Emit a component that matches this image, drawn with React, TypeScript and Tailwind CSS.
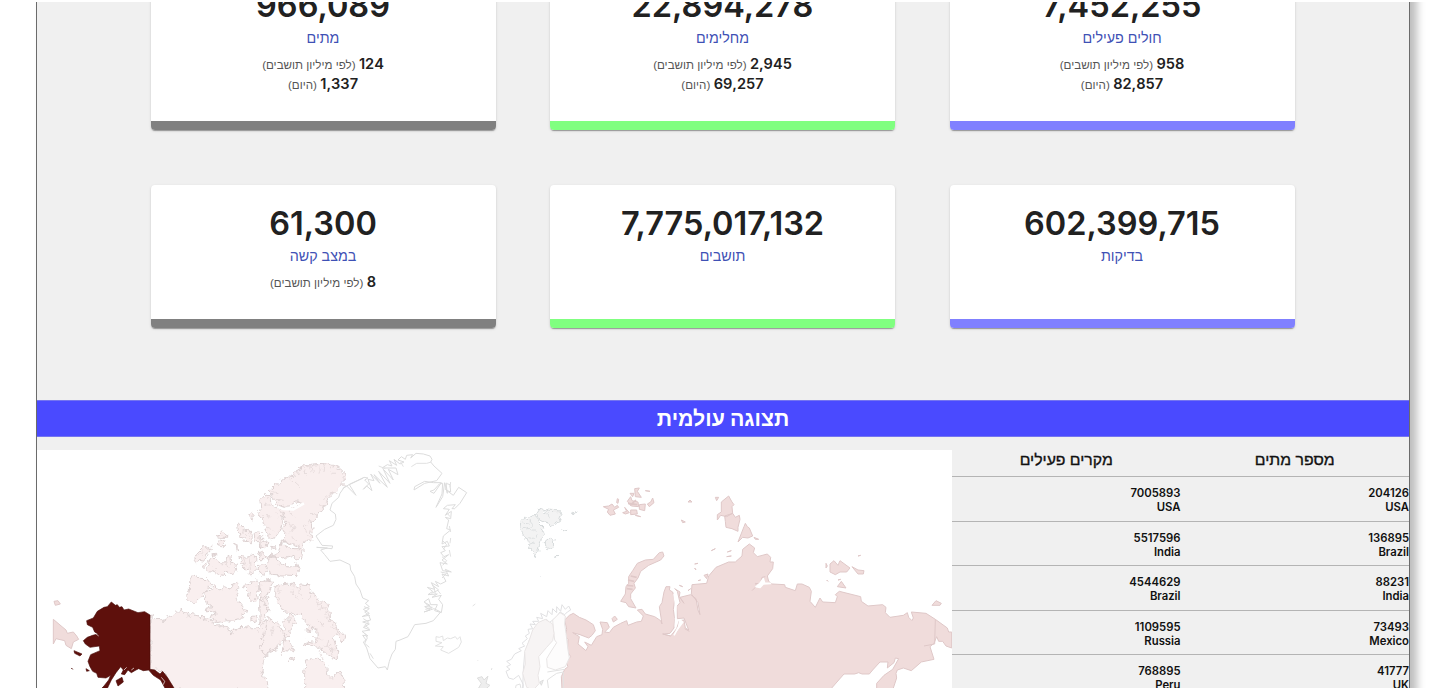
type Card = { value: string; label: string; bar: string; tall?: boolean; lines: [string, string][] };

const PER_MILLION = "(לפי מיליון תושבים)";
const TODAY = "(היום)";

const totals: Card[] = [
  { value: "966,089", label: "מתים", bar: "bg-[#808080]", tall: true, lines: [["124", PER_MILLION], ["1,337", TODAY]] },
  { value: "22,894,278", label: "מחלימים", bar: "bg-[#80ff80]", tall: true, lines: [["2,945", PER_MILLION], ["69,257", TODAY]] },
  { value: "7,452,255", label: "חולים פעילים", bar: "bg-[#8080ff]", tall: true, lines: [["958", PER_MILLION], ["82,857", TODAY]] },
  { value: "61,300", label: "במצב קשה", bar: "bg-[#808080]", lines: [["8", PER_MILLION]] },
  { value: "7,775,017,132", label: "תושבים", bar: "bg-[#80ff80]", lines: [] },
  { value: "602,399,715", label: "בדיקות", bar: "bg-[#8080ff]", lines: [] },
];

const columns: { title: string; rows: [string, string][] }[] = [
  {
    title: "מקרים פעילים",
    rows: [["7005893", "USA"], ["5517596", "India"], ["4544629", "Brazil"], ["1109595", "Russia"], ["768895", "Peru"]],
  },
  {
    title: "מספר מתים",
    rows: [["204126", "USA"], ["136895", "Brazil"], ["88231", "India"], ["73493", "Mexico"], ["41777", "UK"]],
  },
];

function StatCard({ card }: { card: Card }) {
  return (
    <div
      className={`flex flex-col overflow-hidden rounded-[4px] bg-white text-center shadow-[0_2px_1px_-1px_rgba(0,0,0,.2),0_1px_1px_rgba(0,0,0,.14),0_1px_3px_rgba(0,0,0,.12)] ${card.tall ? "h-[163px]" : "h-[143px]"}`}
    >
      <div className="mt-4 h-[46px] text-[32.5px] font-semibold leading-[46px] text-[#212121]">{card.value}</div>
      <div dir="rtl" className="h-5 font-['Liberation_Sans',sans-serif] text-[14.3px] leading-[19px] text-[#3f51b5]">{card.label}</div>
      <div className="mt-[5px] flex-1">
        {card.lines.map(([n, note]) => (
          <div key={note} dir="rtl" className="h-5 text-[12px] leading-5 text-[#555]">
            <span className="text-[14.6px] font-semibold text-[#212121]">{n}</span>{" "}
            <span className="font-['Liberation_Sans',sans-serif] text-[11.6px]">{note}</span>
          </div>
        ))}
      </div>
      <div className={`h-[9px] shrink-0 ${card.bar}`} />
    </div>
  );
}

const canada = [
  // mainland and arctic coast
  "M360 525L398 545L402 538L415 530L428 526L440 516L448 520L454 507L462 522L472 516L475 532L482 524L488 524L520 531L526 540L545 541L550 551L558 558L575 557L590 560L600 572L598 578L604 586L608 570L622 562L640 563L655 557L664 562L676 566L690 570L694 558L688 548L694 538L704 548L712 540L722 538L740 560L756 574L762 560L758 545L766 535L778 545L775 520L788 525L796 545L778 575L768 595L752 605L735 632L712 640L700 665L696 690L702 712L712 725L714 750L430 750L412 712L398 692L372 690L360 688Z",
  "M480 412L500 408L508 415L530 416L546 436L522 456L514 474L492 494L470 472L478 450Z",
  "M524 458L552 440L570 450L582 440L600 446L608 432L622 430L626 442L618 460L628 486L652 518L634 522L640 534L620 534L616 544L592 542L564 548L550 540L538 530L558 522L555 512L530 516L528 505L545 500L528 488Z",
  "M492 360L500 340L516 324L543 320L540 334L528 342L522 356L510 366L498 368ZM516 378L526 366L530 370L522 382ZM548 342L560 340L555 346Z",
  "M534 374L542 352L562 360L580 372L588 364L592 342L600 352L602 370L620 372L614 396L600 402L586 396L568 410L558 400L544 394L530 386Z",
  "M562 290L576 276L590 282L590 292L572 292ZM562 305L572 300L588 304L580 320L566 320Z",
  "M620 252L636 254L640 270L656 268L664 286L662 308L648 304L640 296L626 290L634 282L622 276ZM658 225L664 220L670 228L666 241ZM614 310L620 312L626 330L618 324Z",
  "M672 278L682 272L696 290L692 306L676 304ZM688 312L704 308L708 320L690 320ZM682 338L700 336L710 352L692 356Z",
  "M626 346L640 352L656 350L664 344L678 350L676 374L680 390L670 400L658 402L655 384L640 388L644 372L632 368ZM684 380L700 374L710 394L700 406L686 396Z",
  "M640 440L655 436L664 422L684 424L682 440L690 444L680 460L685 472L668 486L654 474L658 456ZM692 424L706 416L720 420L714 440L718 456L696 466ZM688 478L704 470L718 490L712 516L698 530L690 506ZM662 534L678 524L684 540L672 550Z",
  // Devon, Axel Heiberg and Ellesmere
  "M690 182L706 164L720 172L724 192L734 202L752 210L760 238L752 264L738 292L724 296L712 285L704 262L698 240L686 222L692 204Z",
  "M722 150L740 134L758 118L776 108L790 110L800 94L820 82L838 76L846 72L880 70L908 76L928 86L944 102L946 120L920 148L898 172L880 204L862 230L840 244L846 260L842 280L846 302L826 304L814 324L790 314L772 306L756 300L768 282L754 264L772 252L760 228L754 212L742 200L788 208L820 190L796 186L778 198L748 200L738 184L722 170Z",
  "M718 346L740 350L760 354L780 348L800 360L808 350L814 358L818 334L820 326L790 326L752 318L760 305L740 342ZM714 350L738 346L740 365L760 376L780 378L800 372L808 388L796 410L724 406L708 380ZM690 285L698 284L698 302L714 310L710 324L690 318ZM722 316L738 318L732 330ZM690 340L706 344L708 356L690 356Z",
  "M692 425L710 420L732 424L720 446L714 470L692 476ZM736 440L754 432L772 430L790 430L800 442L812 432L834 434L840 458L860 468L872 484L890 490L900 518L902 540L920 556L926 574L945 580L940 606L922 586L908 590L918 622L922 640L922 660L890 642L876 630L862 622L840 618L826 616L830 604L852 608L862 592L860 570L838 564L828 548L820 528L816 520L802 524L786 518L762 516L750 500L738 486L734 462Z",
  "M690 480L700 482L714 512L700 540L690 548ZM712 530L732 550L742 548L758 574L766 592L764 600L750 608L730 628L708 640L690 640ZM766 600L778 604L792 634L770 632L754 640ZM780 650L792 648L786 660ZM830 660L852 655L874 660L890 678L894 706L906 718L920 700L928 690L942 718L944 750L824 750L824 700Z",
  "M828 570L840 552L852 560L842 572Z",
];

const greenland =
  "M938 146L960 132L990 118L1002 112L1014 114L1004 120L1016 132L1000 148L1010 138L1026 152L1014 118L1032 122L1022 102L1050 130L1032 104L1072 142L1046 94L1080 130L1060 88L1090 120L1075 88L1104 104L1098 84L1056 84L1072 74L1086 78L1078 62L1100 76L1092 58L1110 72L1122 66L1104 60L1114 50L1126 58L1130 46L1148 44L1142 54L1158 40L1180 42L1200 48L1206 58L1202 66L1212 78L1236 100L1220 122L1184 130L1152 150L1154 140L1184 124L1210 128L1234 128L1212 160L1200 154L1212 150L1228 132L1238 130L1236 162L1218 202L1238 170L1244 128L1252 160L1248 130L1260 134L1262 156L1248 150L1270 166L1286 142L1310 158L1290 190L1274 206L1266 206L1276 194L1252 196L1240 206L1258 208L1246 226L1264 214L1262 236L1246 232L1256 240L1250 266L1262 270L1240 288L1236 312L1252 304L1258 318L1236 320L1246 332L1232 338L1242 350L1256 344L1236 360L1252 372L1230 368L1238 392L1264 396L1246 388L1256 408L1236 402L1248 424L1232 432L1216 424L1226 440L1204 428L1214 448L1192 442L1208 454L1194 464L1222 462L1206 472L1234 466L1226 478L1238 494L1234 518L1214 512L1222 494L1202 494L1196 476L1182 486L1200 496L1184 500L1200 510L1182 516L1212 506L1232 516L1210 542L1188 550L1154 554L1142 576L1134 590L1110 600L1098 604L1096 628L1086 642L1078 664L1072 690L1066 680L1044 684L1020 656L1010 624L1000 606L1008 600L998 586L1014 588L996 574L1020 570L1000 562L1018 552L998 546L1022 540L1016 526L996 530L1018 520L1000 508L1018 500L1006 490L1016 482L998 474L990 450L978 432L974 410L962 390L960 374L930 360L900 364L884 344L872 330L892 324L860 322L906 326L908 318L876 316L858 288L884 268L910 256L918 238L916 222L900 210L906 190L926 172L930 160L944 140L950 138L978 166L958 134L1000 114";

const russia = [
  "M1604 540L1618 526L1630 520L1648 532L1668 540L1690 554L1696 572L1686 586L1676 594L1650 584L1628 578L1648 590L1644 612L1668 632L1674 620L1664 606L1684 616L1700 590L1716 584L1718 568L1710 546L1732 548L1738 562L1724 576L1738 578L1750 562L1772 550L1790 542L1794 556L1820 546L1834 544L1840 528L1822 510L1836 508L1846 522L1874 530L1892 542L1896 552L1888 500L1896 488L1902 456L1908 440L1920 440L1918 450L1928 456L1934 480L1930 508L1934 536L1932 564L1920 580L1898 582L1922 588L1940 566L1948 542L1962 540L1966 564L1976 570L1962 534L1942 536L1940 500L1950 488L1942 454L1934 446L1950 456L1948 470L1962 490L1950 472L1982 464L1998 476L2004 510L2010 524L2004 488L1984 462L1986 434L2030 430L2036 408L2058 382L2096 366L2116 366L2136 348L2138 328L2158 312L2174 324L2170 338L2182 350L2212 342L2222 352L2220 366L2230 366L2228 386L2212 408L2216 424L2226 432L2264 434L2266 442L2296 452L2302 432L2316 432L2338 442L2344 454L2340 484L2356 502L2370 474L2378 486L2416 488L2422 470L2416 464L2428 454L2492 470L2494 484L2514 498L2558 494L2568 502L2566 518L2580 532L2620 526L2632 518L2636 532L2646 542L2650 534L2644 516L2688 520L2716 538L2752 564L2756 576L2765 576L2765 624L2748 618L2738 604L2726 604L2720 590L2712 610L2700 620L2712 658L2674 666L2644 692L2620 684L2602 690L2598 700L2600 714L2588 750L2540 750L2540 730L2562 706L2588 688L2606 656L2596 654L2592 668L2572 684L2574 666L2550 666L2528 690L2518 702L2496 702L2486 698L2474 702L2442 702L2400 750L1596 750L1594 710L1604 688L1614 680L1608 666L1622 650L1612 634L1614 598L1606 590L1610 568Z",
  "M1772 484L1786 462L1788 440L1796 430L1796 410L1808 392L1822 370L1846 360L1870 358L1888 338L1898 336L1902 348L1892 360L1856 376L1832 394L1824 414L1812 430L1816 444L1802 462L1802 476L1818 504L1796 500L1788 488Z",
  "M70 538L96 560L108 570L112 580L130 576L140 588L146 598L130 606L124 626L108 616L104 602L78 596L70 612ZM72 484L84 482L91 492L76 496Z",
  "M1720 200L1736 198L1746 192L1754 202L1762 196L1766 202L1750 210L1756 222L1740 226L1732 216L1736 208ZM1762 176L1766 178L1764 190L1760 188Z",
  "M1778 218L1790 214L1784 202L1798 218L1786 222ZM1792 184L1802 170L1806 182L1824 186L1826 200L1804 198ZM1800 160L1812 160L1808 170ZM1814 146L1828 144L1822 154L1834 172L1816 170ZM1828 194L1846 192L1844 212L1828 208ZM1802 210L1820 210L1822 222L1802 224ZM1852 192L1862 186L1868 174L1872 188L1858 200ZM1846 152L1860 154ZM1816 226L1832 230Z",
  "M1974 186L1980 180L1986 186ZM1954 240L1966 246L1958 248ZM2056 172L2066 172L2060 182Z",
  "M2074 186L2096 168L2106 186L2112 194L2106 200L2108 220L2090 230L2072 226L2062 240L2062 224L2074 216ZM2084 228L2108 220L2116 232L2128 226L2130 238L2124 262L2124 274L2106 266L2088 262L2086 244ZM2142 260L2146 250L2152 260L2158 264L2168 288L2154 294L2138 292L2124 306ZM2172 292L2186 298L2176 298Z",
  "M2400 372L2412 362L2424 376L2430 362L2460 384L2450 396L2430 396L2416 404L2400 396ZM2466 380L2484 390L2502 392L2500 402L2484 402ZM2422 440L2434 424L2448 444ZM2388 370L2392 378L2388 384ZM2424 420L2432 418ZM2484 348L2492 346ZM2706 496L2718 482L2734 490L2730 496ZM2390 420L2394 424Z",
  "M1746 536L1754 528L1762 538L1750 546ZM2044 332L2056 326ZM1994 372L2004 370ZM1994 384L1998 390ZM2022 406L2034 402L2030 416ZM2004 422L2012 420ZM2092 336L2104 332ZM2090 350L2104 348ZM1948 436L1958 440ZM1974 452L1982 446Z",
];

const svalbard =
  "M1472 244L1482 230L1494 236L1506 230L1512 222L1522 234L1526 248L1540 262L1532 270L1546 280L1536 290L1530 312L1524 330L1516 350L1504 332L1494 312L1486 294L1478 278L1470 264ZM1520 222L1530 206L1540 216L1556 210L1570 212L1586 212L1594 226L1588 244L1570 256L1544 248L1528 240ZM1546 300L1560 290L1572 302L1570 316L1556 326L1546 312ZM1624 220L1634 212L1642 216ZM1598 272L1614 268ZM1576 352L1582 348ZM1534 410L1536 412Z";

const norway =
  "M1478 750L1480 734L1466 706L1450 718L1436 714L1428 694L1440 688L1430 680L1442 674L1430 664L1444 658L1454 642L1474 632L1466 626L1484 618L1476 610L1492 596L1486 588L1498 580L1494 568L1508 566L1500 552L1516 554L1508 544L1526 544L1520 532L1538 536L1532 520L1550 530L1554 512L1566 524L1568 506L1580 518L1580 500L1592 514L1596 494L1606 508L1616 498L1622 510L1612 516L1604 524L1590 516L1580 530L1568 540L1558 548L1550 538L1530 548L1520 560L1498 600L1484 640L1480 690Z";

const sweden =
  "M1478 700L1486 672L1484 634L1498 600L1508 570L1524 548L1546 538L1568 552L1572 580L1568 602L1550 622L1526 650L1530 680L1524 706L1528 730L1510 750L1490 742Z";

const finland = "M1568 540L1590 518L1606 528L1604 552L1608 580L1614 630L1618 654L1606 680L1576 690L1552 682L1550 656L1562 636L1580 608L1574 600L1570 566Z";

const outlines =
  "M1218 590L1228 592L1238 588L1240 602L1252 594L1262 596L1276 590L1282 598L1290 590L1294 606L1286 622L1256 640L1232 630L1240 620L1216 618L1236 608L1218 604ZM1328 498L1336 492M1342 660L1344 662M1384 690L1386 684M1560 714L1580 700L1600 696L1600 750L1556 750L1552 720ZM1552 696L1604 688M1456 750L1458 736L1470 732L1474 750";

const alaska = [
  "M244 486L256 496L262 494L268 502L276 500L282 510L296 507L324 518L344 515L360 525L360 688L374 690L390 702L398 694L412 712L432 744L440 760L408 750L392 720L370 706L356 690L340 692L326 686L318 690L304 698L294 690L284 704L274 702L280 690L272 680L258 698L244 720L232 745L210 750L222 738L236 720L242 706L228 714L204 712L200 700L188 694L180 680L174 664L182 644L210 632L208 618L180 622L166 612L160 602L172 592L188 586L204 582L194 576L188 562L172 554L170 542L190 534L202 514L222 502L232 500Z",
  "M132 632L156 642L150 648L134 640ZM168 686L178 692L170 694ZM124 684L128 688ZM258 722L276 712L280 726L264 738Z",
];

function WorldMap() {
  return (
    <svg viewBox="37 450 915 238" className="h-[238px] w-[915px] shrink-0 bg-white">
      <defs>
        <filter id="coast" x="0" y="0" width="100%" height="100%" colorInterpolationFilters="sRGB">
          <feTurbulence type="fractalNoise" baseFrequency="0.07" numOctaves="2" seed="4" />
          <feDisplacementMap in="SourceGraphic" scale="22" xChannelSelector="R" yChannelSelector="G" />
        </filter>
      </defs>
      <g transform="translate(30 440) scale(.333333)" strokeWidth="3" strokeLinejoin="round">
        <g filter="url(#coast)">
          <g fill="#f9efef" stroke="#ddd2d2">
            {canada.map((d) => <path key={d} d={d} />)}
          </g>
          <g fill="none" stroke="#e3d8d8" strokeWidth="2.5">
            <path d="M728 155L752 164M730 174L764 178M778 110L810 140M820 85L828 104M842 76L848 102M866 74L868 100M884 72L878 92M900 78L906 98M924 92L908 104M922 150L896 164L880 180M866 190L880 200M900 158L922 158M864 226L846 220M838 250L822 258L830 278M776 212L794 232M772 250L792 262L780 280M826 284L838 292M818 300L834 306M788 290L800 306M700 190L716 196M696 224L718 228M736 214L748 230M708 264L730 270" />
            <path d="M866 480L862 498L876 494L872 510L886 502L884 520L894 516L888 532L900 528L898 546L910 546L906 562L920 564L916 580L932 584M748 440L744 480M790 436L786 458L802 478M812 438L806 456L824 476M842 466L838 486M862 540L880 560M852 592L880 600M896 600L888 622L902 616L898 634L912 626L908 646M864 630L880 656M546 378L566 390M564 364L576 376M586 362L594 384M640 352L648 376M660 352L664 390M638 270L656 290M500 352L520 334M696 556L704 540M730 560L724 590" />
          </g>
        </g>
        <path d="M742 200L760 207L790 208L822 190" fill="none" stroke="#fff" strokeWidth="8" />
        <path d={greenland} fill="none" stroke="#dcdcdc" />
        <path d="M1144 80L1160 70L1190 70L1204 66M1046 78L1066 86M1112 66L1120 80M1250 128L1246 150M1262 126L1260 142M1252 220L1260 230M1258 258L1262 276M1262 294L1260 310M1258 330L1262 350M1212 440L1216 462M1224 452L1232 462M1188 500L1208 502" fill="none" stroke="#e1e1e1" />
        <path d="M1002 500L1018 506L1004 516L1020 528M1000 536L1016 546L1004 556L1018 566M1004 580L1012 594L1004 610L1018 622M1020 640L1030 656M1236 300L1250 314L1240 328M1236 350L1250 362L1238 376M1232 396L1250 400L1236 414M1206 434L1226 450L1204 460M1186 490L1206 504L1186 508" fill="none" stroke="#dedede" />
        <g fill="#f0dcdb" stroke="#dfc8c8">
          {russia.map((d) => <path key={d} d={d} />)}
          <path d="M2716 538L2714 612L2682 618M2166 452L2180 438L2176 430L2190 432L2196 412L2206 410M1898 582L1922 588M1964 566L1978 574" fill="none" />
          <path d="M1794 420L1812 424M1790 436L1810 438M1790 446L1808 448M1802 408L1820 412M1794 190L1822 194M1800 196L1818 180" fill="none" strokeWidth="5" />
        </g>
        <path d="M2178 440L2190 430L2200 416L2204 430L2222 430L2200 432L2190 442ZM1932 586L1946 560L1950 540L1960 548" fill="#fff" stroke="#fff" strokeWidth="5" />
        <path d="M1932 462L1938 500L1936 560" fill="none" stroke="#fff" strokeWidth="5" />
        <g filter="url(#coast)">
          <path d={svalbard} fill="#f3f3f3" stroke="#d6dadb" />
          <path d="M1480 266L1500 262L1520 274M1492 290L1510 292L1526 282M1500 240L1508 260M1500 312L1520 304M1554 216L1558 236M1480 246L1496 250" fill="none" stroke="#dcdfe0" />
        </g>
        <path d={norway} fill="#fff" stroke="#e0e0e2" />
        <path d={finland} fill="#fdfcfc" stroke="#e8e5e5" />
        <path d={sweden} fill="#f7f4f4" stroke="#e9e5e5" />
        <path d={outlines} fill="none" stroke="#e2e2e2" />
        <path d="M1342 714L1356 710L1362 720L1374 708L1368 730L1380 736L1364 750L1346 744L1354 730ZM1530 726L1540 720L1534 736Z" fill="#eee" stroke="#dedede" />
        <g fill="#5e100c" stroke="#4c0d0a" strokeWidth="2">
          {alaska.map((d) => <path key={d} d={d} />)}
        </g>
        <path d="M282 690L290 682M304 690L312 684M196 580L206 588M394 712L404 724L400 734" stroke="#fff" strokeWidth="2" fill="none" />
      </g>
    </svg>
  );
}

export default function App() {
  return (
    <div className="h-[691px] w-[1446px] overflow-hidden bg-white pt-[2px] font-['Inter','Liberation_Sans',sans-serif]">
      <div className="h-[686px] overflow-hidden pl-[36px]">
        <div className="h-[760px] w-[1374px] border-x border-[#6b6b6b] bg-[#f0f0f0] shadow-[7px_0_8px_0_rgba(0,0,0,.26)]">
          <div className="-mt-[35px] grid grid-cols-[repeat(3,345px)] gap-x-[54.5px] gap-y-[55px] pl-[113.5px]">
            {totals.map((card) => <StatCard key={card.label} card={card} />)}
          </div>
          <h2 dir="rtl" className="mt-[71.5px] h-[37.5px] border-y border-[#7474f0] bg-[#4a4aff] text-center text-[21.3px] font-bold leading-[35px] text-white">
            תצוגה עולמית
          </h2>
          <div className="mt-[13px] flex">
            <WorldMap />
            {columns.map((col) => (
              <div key={col.title} className="flex-1 text-right text-[#111]">
                <div dir="rtl" className="h-[27px] border-b border-[#b4b4b4] text-center font-['Liberation_Sans',sans-serif] text-[15.8px] leading-[20px] [-webkit-text-stroke:0.35px_#111]">{col.title}</div>
                {col.rows.map(([n, name]) => (
                  <div key={name} className="h-[44.6px] border-b border-[#b4b4b4] pt-[9px] text-[11.3px] font-semibold leading-[14px]">
                    <div>{n}</div>
                    <div>{name}</div>
                  </div>
                ))}
              </div>
            ))}
          </div>
        </div>
      </div>
    </div>
  );
}
